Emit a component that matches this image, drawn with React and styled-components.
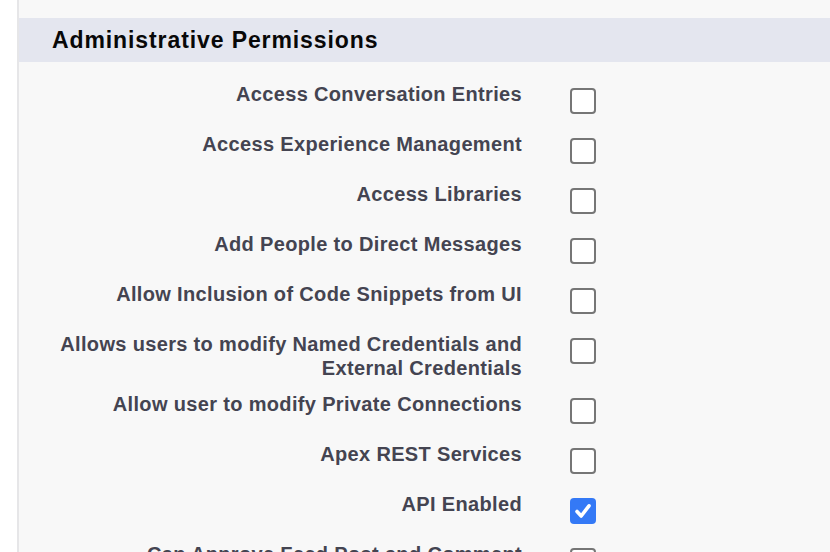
import React from "react";
import styled, { createGlobalStyle } from "styled-components";

const GlobalStyle = createGlobalStyle`
  html, body {
    margin: 0;
    padding: 0;
    background: #fff;
    overflow: hidden;
  }
  body {
    font-family: "Liberation Sans", Arial, Helvetica, sans-serif;
  }
`;

const Page = styled.div`
  display: flex;
  height: 552px;
  background: #fff;
`;

const Gutter = styled.div`
  width: 17px;
  flex-shrink: 0;
  background: #fff;
  border-right: 2px solid #e6e6e8;
`;

const Panel = styled.section`
  flex: 1;
  background: #f8f8f8;
  padding-top: 18px;
`;

const SectionHeader = styled.h2`
  margin: 0;
  height: 44px;
  display: flex;
  align-items: center;
  padding-left: 33px;
  background: #e4e6ef;
  color: #080808;
  font-size: 23px;
  font-weight: 700;
  letter-spacing: 0.9px;
`;

const List = styled.div`
  padding-top: 14px;
  display: flex;
  flex-direction: column;
`;

const Row = styled.div`
  display: grid;
  grid-template-columns: 471px 26px;
  column-gap: 48px;
  align-items: start;
  padding: 6px 0 6px 32px;
`;

const Label = styled.label`
  text-align: right;
  color: #444451;
  font-size: 20px;
  font-weight: 700;
  line-height: 24px;
  letter-spacing: 0.34px;
`;

const Box = styled.span`
  box-sizing: border-box;
  width: 26px;
  height: 26px;
  margin: 6px 0;
  border-radius: 4px;
  display: flex;
  align-items: center;
  justify-content: center;
  background: ${(p) => (p.checked ? "#3479f6" : "#fff")};
  border: ${(p) => (p.checked ? "none" : "2px solid #767676")};
`;

const permissions = [
  { name: "Access Conversation Entries" },
  { name: "Access Experience Management" },
  { name: "Access Libraries" },
  { name: "Add People to Direct Messages" },
  { name: "Allow Inclusion of Code Snippets from UI" },
  { name: "Allows users to modify Named Credentials and External Credentials" },
  { name: "Allow user to modify Private Connections" },
  { name: "Apex REST Services" },
  { name: "API Enabled", checked: true },
  { name: "Can Approve Feed Post and Comment" },
];

function Checkbox({ checked }) {
  return (
    <Box checked={checked}>
      {checked && (
        <svg width="20" height="20" viewBox="0 0 20 20">
          <path
            d="M4 10.5 L8.2 15 L16 4.8"
            fill="none"
            stroke="#fff"
            strokeWidth="3.6"
            strokeLinecap="round"
            strokeLinejoin="round"
          />
        </svg>
      )}
    </Box>
  );
}

export default function App() {
  return (
    <Page>
      <GlobalStyle />
      <Gutter />
      <Panel>
        <SectionHeader>Administrative Permissions</SectionHeader>
        <List>
          {permissions.map((p) => (
            <Row key={p.name}>
              <Label>{p.name}</Label>
              <Checkbox checked={p.checked} />
            </Row>
          ))}
        </List>
      </Panel>
    </Page>
  );
}
